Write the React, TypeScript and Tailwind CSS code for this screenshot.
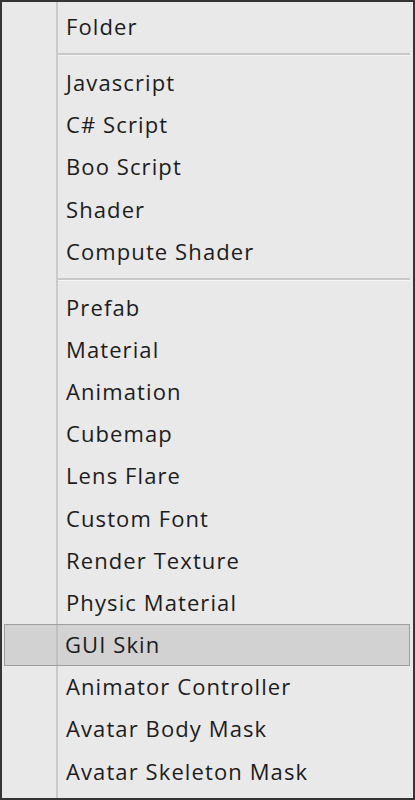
import React from "react";

const groups: string[][] = [
  ["Folder"],
  ["Javascript", "C# Script", "Boo Script", "Shader", "Compute Shader"],
  [
    "Prefab",
    "Material",
    "Animation",
    "Cubemap",
    "Lens Flare",
    "Custom Font",
    "Render Texture",
    "Physic Material",
    "GUI Skin",
    "Animator Controller",
    "Avatar Body Mask",
    "Avatar Skeleton Mask",
  ],
];

function Row({ label }: { label: string }) {
  const active = label === "GUI Skin";
  if (active) {
    return (
      <div className="flex h-[42.2px] items-stretch border border-[#9e9e9e] bg-[#d2d2d2]">
        <div className="w-[51px] shrink-0" />
        <div className="flex flex-1 items-center border-l-2 border-[#c0c0c0] pb-[2px] pl-[7px]">
          <span className="text-[22px] font-medium leading-none tracking-[1.1px] text-[#1c1c1c]">{label}</span>
        </div>
      </div>
    );
  }
  return (
    <div className="flex h-[42.2px] items-stretch">
      <div className="w-[52px] shrink-0" />
      <div className="flex flex-1 items-center border-l-2 border-[#cacaca] pb-[2px] pl-[8px]">
        <span className="text-[22px] font-medium leading-none tracking-[1.1px] text-[#1c1c1c]">{label}</span>
      </div>
    </div>
  );
}

function Separator() {
  return (
    <div className="flex h-[13.7px] items-stretch">
      <div className="w-[52px] shrink-0" />
      <div className="flex flex-1 flex-col border-l-2 border-[#cacaca]">
        <div className="mt-[5px] h-[2px] bg-[#c8c8c8]" />
        <div className="h-[1px] bg-[#f4f4f4]" />
      </div>
    </div>
  );
}

export default function App() {
  return (
    <div
      className="h-[800px] w-[415px] overflow-hidden border-2 border-[#353535] bg-[#e9e9e9]"
      style={{ fontFamily: '"Open Sans", "Noto Sans", sans-serif' }}
    >
      <div className="flex h-full flex-col pl-[2px] pr-[3px]">
        <div className="flex h-[4px] items-stretch">
          <div className="w-[52px] shrink-0" />
          <div className="flex-1 border-l-2 border-[#cacaca]" />
        </div>
        {groups.map((g, gi) => (
          <React.Fragment key={gi}>
            {gi > 0 && <Separator />}
            {g.map((l) => (
              <Row key={l} label={l} />
            ))}
          </React.Fragment>
        ))}
        <div className="flex flex-1 items-stretch">
          <div className="w-[52px] shrink-0" />
          <div className="flex-1 border-l-2 border-[#cacaca]" />
        </div>
      </div>
    </div>
  );
}
